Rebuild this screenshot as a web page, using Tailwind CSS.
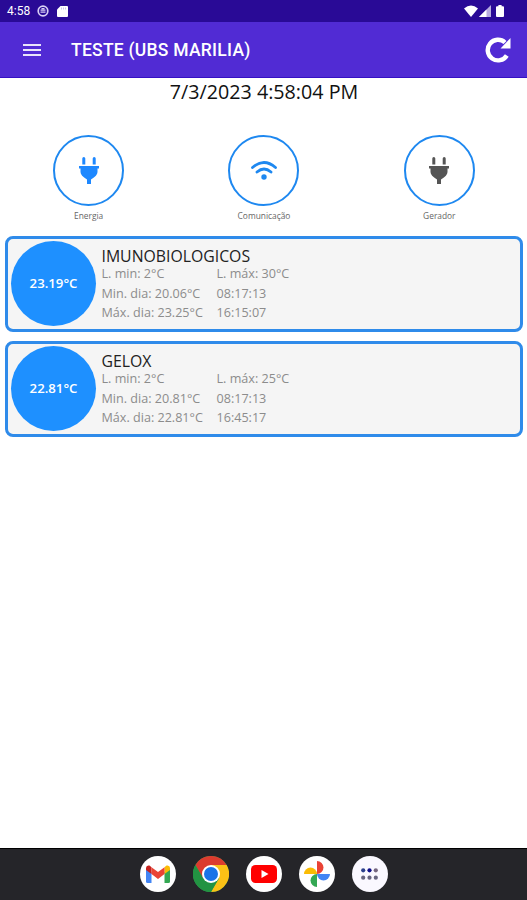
<!DOCTYPE html>
<html lang="pt-BR">

<head>
    <meta charset="UTF-8" />
    <meta name="viewport" content="width=device-width, initial-scale=1.0" />
    <title>TESTE (UBS MARILIA)</title>
    <script src="https://cdn.jsdelivr.net/npm/@tailwindcss/browser@4"></script>
</head>

<body class="flex h-screen flex-col overflow-hidden bg-white font-['Open_Sans',sans-serif]">
    <!-- status bar -->
    <div class="flex h-[22px] shrink-0 items-center bg-[#290a96] pl-[7px] pr-[23px] text-white">
        <span class="w-[30px] font-[Roboto,sans-serif] text-[12px] leading-none">4:58</span>
        <svg class="size-3" viewBox="0 0 12 12" fill="none" stroke="#d9d0f5">
            <circle cx="6" cy="6" r="4.8" stroke-width="1.7" />
            <path d="M3.5 5.2h5M3.5 7.2h5M4.5 3.6h3" stroke-width="1.2" />
        </svg>
        <svg class="ml-2 h-[11px] w-[11px]" viewBox="0 0 11 11" fill="#fff">
            <path d="M3.5 0H10q1 0 1 1v9q0 1-1 1H1q-1 0-1-1V3.5z" />
            <path d="M4.5 1.5v2M6.5 1.5v2M8.5 1.5v2" stroke="#b9a8ea" stroke-width=".7" />
        </svg>
        <svg class="ml-auto h-3 w-[14px]" viewBox="0 0 14 12" fill="#fff">
            <path d="M0 3.4Q7-2.4 14 3.4L7 12z" />
        </svg>
        <svg class="ml-px h-3 w-3" viewBox="0 0 12 12">
            <path d="M12 0v12H0z" fill="#b7abe0" />
            <path d="M7.5 4.5V12H0z" fill="#fff" />
        </svg>
        <svg class="ml-[5px] h-3 w-[8px]" viewBox="0 0 8 12" fill="#fff">
            <path d="M2.4 0h3.2v1.2H7q1 0 1 1V11q0 1-1 1H1q-1 0-1-1V2.2q0-1 1-1h1.4z" />
        </svg>
    </div>

    <!-- app bar -->
    <header class="flex h-14 shrink-0 items-center border-b border-[#3510c4] bg-[#512bd4] pl-[23px] pr-4 text-white">
        <svg class="h-3 w-[18px]" viewBox="0 0 18 12" fill="#e9e4fb">
            <path d="M0 0h18v2H0zM0 5h18v2H0zM0 10h18v2H0z" />
        </svg>
        <h1 class="ml-[30px] whitespace-nowrap pt-[3px] font-[Roboto,sans-serif] text-[17.5px] font-medium leading-none tracking-[0.25px]">TESTE (UBS MARILIA)</h1>
        <svg class="ml-auto h-[26px] w-[26px]" viewBox="0 0 26 26">
            <path d="M21.8 18.5A10.3 10.3 0 1 1 20 5.5" fill="none" stroke="#fff" stroke-width="4.4" />
            <path d="M25.5 1v10.500H15.500z" fill="#fff" />
        </svg>
    </header>

    <main class="flex-1">
        <p class="h-[57px] pl-px text-center text-[19.7px] leading-7 text-[#111]">7/3/2023 4:58:04 PM</p>

        <!-- status indicators -->
        <section class="grid h-[101px] grid-cols-3 pl-px text-[8.4px] leading-[11px] text-[#666]">
            <div class="flex flex-col items-center">
                <div class="flex size-[71px] items-center justify-center rounded-full border-2 border-[#1e88f0]">
                    <svg class="h-[27px] w-5" viewBox="0 0 20 27" fill="#1e88ff">
                        <path d="M3.3 1.5q0-1.5 1.500-1.500t1.500 1.500v6h-3zM13.700 1.500q0-1.500 1.500-1.500t1.500 1.500v6h-3zM0 9h20v2.500h-1.500V15q0 3.500-6.500 7.500v4.500H8v-4.500Q1.500 18.500 1.500 15v-3.500H0z" />
                    </svg>
                </div>
                <span class="mt-1">Energia</span>
            </div>
            <div class="flex flex-col items-center">
                <div class="flex size-[71px] items-center justify-center rounded-full border-2 border-[#1e88f0]">
                    <svg class="h-[19px] w-[26px]" viewBox="0 0 26 19" fill="none" stroke="#1e88f0" stroke-width="2.8" stroke-linecap="round">
                        <path d="M1.5 6.500Q13-3.500 24.500 6.500M6 11Q13 5 20 11" />
                        <circle cx="13" cy="16" r="2.700" fill="#1e88f0" stroke="none" />
                    </svg>
                </div>
                <span class="mt-1">Comunicação</span>
            </div>
            <div class="flex flex-col items-center">
                <div class="flex size-[71px] items-center justify-center rounded-full border-2 border-[#1e88f0]">
                    <svg class="h-[27px] w-5" viewBox="0 0 20 27" fill="#555">
                        <path d="M3.3 1.5q0-1.5 1.500-1.500t1.500 1.500v6h-3zM13.700 1.500q0-1.500 1.500-1.500t1.500 1.500v6h-3zM0 9h20v2.500h-1.500V15q0 3.500-6.500 7.500v4.500H8v-4.500Q1.500 18.500 1.500 15v-3.500H0z" />
                    </svg>
                </div>
                <span class="mt-1">Gerador</span>
            </div>
        </section>

        <!-- sensors -->
        <section class="flex flex-col gap-[9px] pl-[5px] pr-1">
            <article class="flex h-24 rounded-lg border-[3px] border-[#2f8bea] bg-[#f5f5f5] pl-[3px] pt-[2px]">
                <div class="flex size-[85px] shrink-0 items-center justify-center rounded-full bg-[#1e90ff] text-[13.2px] font-semibold text-white">23.19°C</div>
                <div class="ml-[5.5px] mt-[6px]">
                    <h2 class="h-[17px] text-[15.8px] leading-[19px] text-[#222]">IMUNOBIOLOGICOS</h2>
                    <div class="grid grid-cols-[115px_auto] whitespace-nowrap text-[12.6px] leading-[19.5px] text-[#8c8c8c]">
                        <span>L. min: 2°C</span><span>L. máx: 30°C</span>
                        <span>Min. dia: 20.06°C</span><span>08:17:13</span>
                        <span>Máx. dia: 23.25°C</span><span>16:15:07</span>
                    </div>
                </div>
            </article>
            <article class="flex h-24 rounded-lg border-[3px] border-[#2f8bea] bg-[#f5f5f5] pl-[3px] pt-[2px]">
                <div class="flex size-[85px] shrink-0 items-center justify-center rounded-full bg-[#1e90ff] text-[13.2px] font-semibold text-white">22.81°C</div>
                <div class="ml-[5.5px] mt-[6px]">
                    <h2 class="h-[17px] text-[15.8px] leading-[19px] text-[#222]">GELOX</h2>
                    <div class="grid grid-cols-[115px_auto] whitespace-nowrap text-[12.6px] leading-[19.5px] text-[#8c8c8c]">
                        <span>L. min: 2°C</span><span>L. máx: 25°C</span>
                        <span>Min. dia: 20.81°C</span><span>08:17:13</span>
                        <span>Máx. dia: 22.81°C</span><span>16:45:17</span>
                    </div>
                </div>
            </article>
        </section>
    </main>

    <!-- dock -->
    <nav class="flex h-[52px] shrink-0 items-center justify-center gap-[17px] border-t border-black bg-[#252529] pb-[2px]">
        <div class="flex size-9 items-center justify-center rounded-full bg-white">
            <svg class="h-[18px] w-6" viewBox="0 0 24 18">
                <path d="M0 3v13.500Q0 18 1.500 18H5.500V7z" fill="#4285f4" />
                <path d="M24 3v13.500q0 1.500-1.500 1.500H18.500V7z" fill="#34a853" />
                <path d="M18.500 2.200V9L24 5V3q0-3-3.500-2.400z" fill="#fbbc04" />
                <path d="M0 3v2l5.500 4V2.200L3.500.6Q0 0 0 3z" fill="#c5221f" />
                <path d="M5.500 2.200 12 7l6.500-4.800V9L12 14 5.500 9z" fill="#ea4335" />
            </svg>
        </div>
        <svg class="size-9" viewBox="0 0 36 36">
            <circle cx="18" cy="18" r="18" fill="#34a853" />
            <path d="M18 18 2.400 9A18 18 0 0 1 33.600 9z" fill="#dc3b2e" />
            <path d="M18 9h15.600A18 18 0 0 1 18 36l7.800-13.500z" fill="#fbc116" />
            <path d="M2.400 9 10.200 22.500 18 9z" fill="#dc3b2e" />
            <path d="M2.400 9A18 18 0 0 0 18 36l7.800-13.500H10.200z" fill="#229342" />
            <circle cx="18" cy="18" r="9" fill="#fff" />
            <circle cx="18" cy="18" r="7" fill="#1a73e8" />
        </svg>
        <div class="flex size-9 items-center justify-center rounded-full bg-white">
            <svg class="h-[18px] w-[26px]" viewBox="0 0 26 18">
                <rect width="26" height="18" rx="4.500" fill="#f00" />
                <path d="M10.500 5v8l7-4z" fill="#fff" />
            </svg>
        </div>
        <div class="flex size-9 items-center justify-center rounded-full bg-white">
            <svg class="size-[26px]" viewBox="0 0 26 26">
                <path d="M13 0a6.500 6.500 0 0 1 0 13z" fill="#ea4335" />
                <path d="M26 13a6.500 6.500 0 0 1-13 0z" fill="#4285f4" />
                <path d="M13 26a6.500 6.500 0 0 1 0-13z" fill="#34a853" />
                <path d="M0 13a6.500 6.500 0 0 1 13 0z" fill="#fbbc04" />
            </svg>
        </div>
        <div class="flex size-9 items-center justify-center rounded-full bg-[#faf8ff]">
            <svg class="h-3 w-[17px]" viewBox="0 0 17 12">
                <g fill="#2b3f8c">
                    <circle cx="2.2" cy="2.3" r="2.1" />
                    <circle cx="8.5" cy="2.3" r="2.1" fill="#10108a" />
                    <circle cx="14.8" cy="2.3" r="2.1" fill="#75667f" />
                </g>
                <g fill="#686580">
                    <circle cx="2.2" cy="9.7" r="2.1" />
                    <circle cx="8.5" cy="9.7" r="2.1" />
                    <circle cx="14.8" cy="9.7" r="2.1" />
                </g>
            </svg>
        </div>
    </nav>
</body>

</html>
